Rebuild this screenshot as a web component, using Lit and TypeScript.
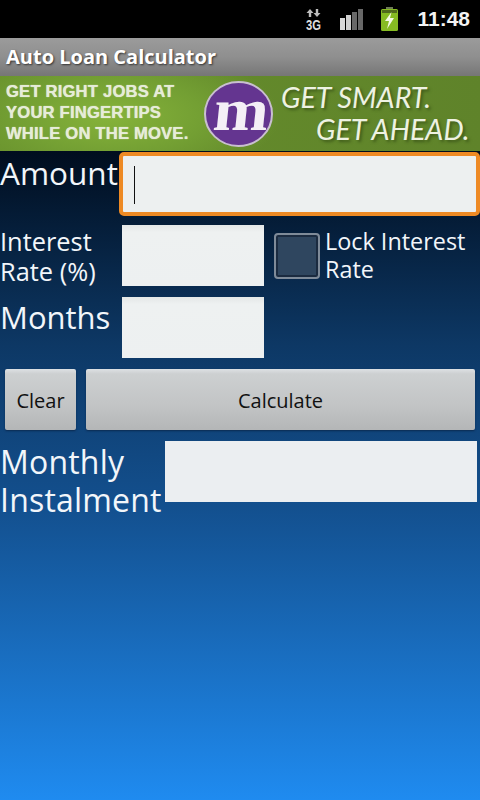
import { LitElement, html, css } from "lit";
import { customElement } from "lit/decorators.js";

@customElement("app-root")
export class AppRoot extends LitElement {
  static styles = css`
    :host { display: block; width: 480px; height: 800px; overflow: hidden; font-family: "Open Sans", "Noto Sans", sans-serif; color: #f2f6fa; }
    .status { height: 38px; background: #000; display: flex; align-items: center; justify-content: flex-end; box-sizing: border-box; padding-right: 10px; }
    .status svg { display: block; flex: none; overflow: visible; }
    .n3g { margin-right: 19px; }
    .sig { margin-right: 18px; }
    .bat { margin-right: 19px; }
    .clock { font: bold 21px "Liberation Sans", Arial, sans-serif; color: #f4f4f4; width: 53px; text-align: right; white-space: nowrap; }
    .title { height: 38px; box-sizing: border-box; padding: 0 6px 2px; display: flex; align-items: center; background: linear-gradient(#9b9b9b, #8f8f8f 50%, #767676); color: #fff; font-weight: 700; font-size: 20px; text-shadow: 1px 1px 2px #333; white-space: nowrap; }
    .ad { height: 75px; background: radial-gradient(ellipse 170px 70px at 110px 40px, #86b33a 0%, #739f33 55%, transparent 100%), linear-gradient(90deg, #678f2c, #5f832a); overflow: hidden; display: flex; align-items: center; }
    .adleft { width: 204px; flex: none; padding: 0 0 2px 6px; box-sizing: border-box; font: 700 16.6px/21px "Liberation Sans", Arial, sans-serif; letter-spacing: 0.2px; color: #e6ecd8; white-space: nowrap; text-shadow: 0 0 1px #e6ecd8; }
    .logo { width: 69px; height: 66px; flex: none; overflow: visible; }
    .adright { flex: 1; min-width: 0; padding: 0 0 2px 8px; font: italic 28.6px/32px "Lato", sans-serif; color: #eef2e2; text-shadow: 2px 2px 3px #3e5a1a; white-space: nowrap; }
    .adright div:last-child { margin-left: 35px; }
    .main { height: 649px; box-sizing: border-box; padding-top: 1px; background: linear-gradient(#000d1e 0%, #0d3865 30%, #13508f 55%, #1f8bf0 100%); }
    .row { display: flex; align-items: flex-start; }
    .lbl { font-size: 31.5px; line-height: 38px; white-space: nowrap; box-sizing: border-box; flex: none; }
    .lbl.small { font-size: 25.4px; line-height: 30px; }
    .field { box-sizing: border-box; background: linear-gradient(#e4e7e6, #eef1f1 12%, #edf0f1); height: 61px; }
    .amount .lbl { padding: 2px 0 0 0; width: 119px; }
    .amount .field { flex: 1; height: 64px; border: 4px solid #ee8a24; border-radius: 5px; display: flex; align-items: center; padding-left: 11px; background: #edf0f0; }
    .caret { width: 1px; height: 38px; background: #111; margin-top: 1px; }
    .rate { margin-top: 9px; height: 61px; }
    .rate .lbl { padding: 1px 0 0 0; width: 122px; }
    .rate .field, .months .field { width: 142px; }
    .check { width: 46px; height: 46px; box-sizing: border-box; margin: 8px 5px 0 10px; border: 2px solid #7f8b99; border-radius: 4px; background: #2f465f; box-shadow: inset 0 0 0 2px #1b2b40; flex: none; }
    .lock { font-size: 23.4px; line-height: 28px; padding-top: 2px; white-space: nowrap; }
    .months { margin-top: 11px; }
    .months .lbl { padding: 1px 0 0 0; width: 122px; font-size: 31px; }
    .btns { margin-top: 11px; padding: 0 5px; gap: 10px; }
    .btn { height: 61px; box-sizing: border-box; padding-top: 1px; border-radius: 2px; display: flex; align-items: center; justify-content: center; color: #111; font-size: 20px; background: linear-gradient(#dde1e4 0, #cdd0d1 8%, #c2c4c5 60%, #b4b6b7 100%); box-shadow: 0 1px 2px #0b2a50; }
    .clear { width: 71px; flex: none; }
    .calc { flex: 1; }
    .inst { margin-top: 11px; }
    .inst .lbl { padding: 2px 0 0 0; width: 165px; font-size: 32px; letter-spacing: 0.2px; }
    .inst .field { width: 312px; background: #ebeef1; }
  `;
  render() {
    return html`
      <div class="status">
        <svg class="n3g" width="15" height="21" viewBox="0 0 15 21">
          <path d="M4 0 L0.5 4 H2.8 V8 H5.2 V4 H7.5 Z M11 8 L7.5 4 H9.8 V0 H12.2 V4 H14.5 Z" fill="#bdbdbd"/>
          <text x="0" y="21" font-family="Liberation Sans" font-weight="700" font-size="14.5" fill="#dcdcdc" textLength="15" lengthAdjust="spacingAndGlyphs">3G</text>
        </svg>
        <svg class="sig" width="23" height="21" viewBox="0 0 23 21">
          <rect x="0" y="9" width="5" height="12" fill="#d8d8d8"/>
          <rect x="6" y="6" width="5" height="15" fill="#cfcfcf"/>
          <rect x="12" y="3" width="5" height="18" fill="#686868"/>
          <rect x="18" y="0" width="5" height="21" fill="#686868"/>
        </svg>
        <svg class="bat" width="17" height="24" viewBox="0 0 17 24">
          <rect x="5" y="0" width="7" height="3" fill="#6d7a55"/>
          <rect x="0" y="2" width="17" height="22" rx="1.5" fill="#86bb22"/>
          <rect x="1" y="3" width="15" height="3" fill="#506a1c"/>
          <path d="M10.5 5 L4 14 H8 L6 22 L13 11 H9 Z" fill="#f4f9e4"/>
        </svg>
        <div class="clock">11:48</div>
      </div>
      <div class="title">Auto Loan Calculator</div>
      <div class="ad">
        <div class="adleft">GET RIGHT JOBS AT<br />YOUR FINGERTIPS<br />WHILE ON THE MOVE.</div>
        <svg class="logo" viewBox="0 0 69 66">
          <ellipse cx="34.5" cy="33" rx="33.5" ry="32" fill="#643590" stroke="#c9bfd0" stroke-width="2"/>
          <text x="0" y="0" transform="translate(8 49) skewX(-6)" font-family="Liberation Serif" font-weight="700" font-size="60" fill="#f4eff6" textLength="55" lengthAdjust="spacingAndGlyphs">m</text>
        </svg>
        <div class="adright"><div>GET SMART.</div><div>GET AHEAD.</div></div>
      </div>
      <div class="main">
        <div class="row amount">
          <div class="lbl">Amount</div>
          <div class="field"><div class="caret"></div></div>
        </div>
        <div class="row rate">
          <div class="lbl small">Interest<br />Rate (%)</div>
          <div class="field"></div>
          <div class="check"></div>
          <div class="lock">Lock Interest<br />Rate</div>
        </div>
        <div class="row months">
          <div class="lbl">Months</div>
          <div class="field"></div>
        </div>
        <div class="row btns">
          <div class="btn clear">Clear</div>
          <div class="btn calc">Calculate</div>
        </div>
        <div class="row inst">
          <div class="lbl">Monthly<br />Instalment</div>
          <div class="field"></div>
        </div>
      </div>
    `;
  }
}
